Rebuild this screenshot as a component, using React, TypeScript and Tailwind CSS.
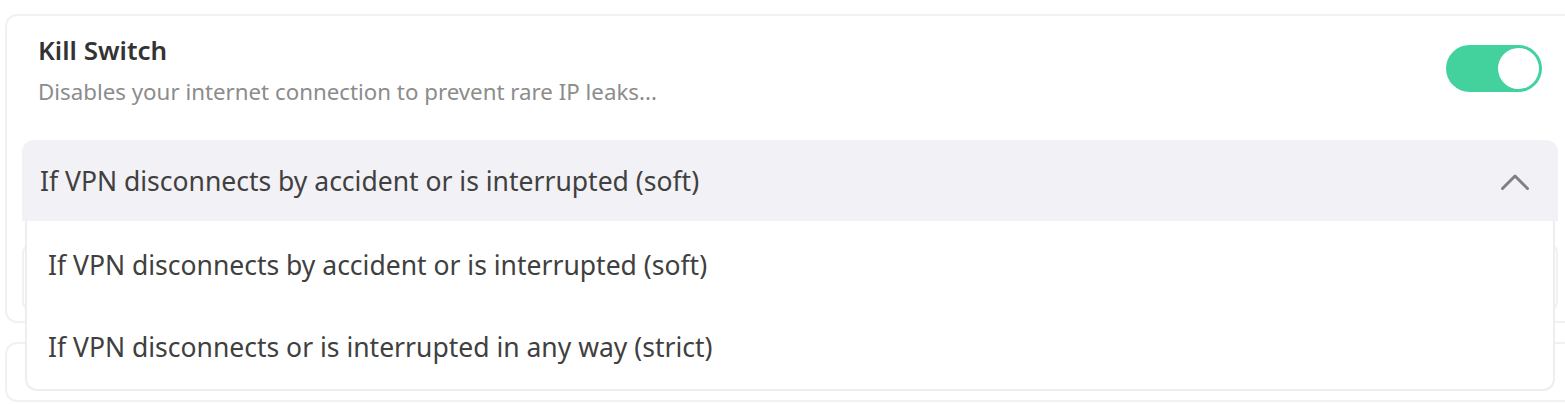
import React from "react";

const options = [
  "If VPN disconnects by accident or is interrupted (soft)",
  "If VPN disconnects or is interrupted in any way (strict)",
];

export default function App() {
  return (
    <div
      className="w-[1565px] h-[404px] overflow-hidden bg-white pl-[5px] pt-[14px]"
      style={{ fontFamily: '"Noto Sans", "Open Sans", sans-serif' }}
    >
      <div className="w-[1580px] rounded-xl border-2 border-[#f1f1f3] bg-white px-[15px] pt-[16px] pb-[8px]">
        <div className="flex items-start justify-between pl-4 pr-[26px]">
          <div>
            <div className="text-[26px] font-semibold leading-[36px] text-[#333]">Kill Switch</div>
            <div className="mt-[9px] text-[22.3px] leading-[30px] text-[#8c8c8c]">
              Disables your internet connection to prevent rare IP leaks...
            </div>
          </div>
          <button className="mt-[13px] flex h-[47px] w-[96px] items-center justify-end rounded-full bg-[#43d19e] p-[3px]">
            <span className="h-[41px] w-[41px] rounded-full bg-white" />
          </button>
        </div>

        <div className="relative mt-[33px] w-[1536px]">
          <div className="flex h-[81px] items-center justify-between rounded-t-xl bg-[#f2f1f6] pl-[18px] pr-[28px]">
            <span className="mt-[3px] text-[26.5px] text-[#404040]">{options[0]}</span>
            <svg width="30" height="18" viewBox="0 0 30 18" fill="none" className="mt-[2px]">
              <path d="M2.5 15.5 L15 3 L27.5 15.5" stroke="#808080" strokeWidth="3" strokeLinecap="round" strokeLinejoin="round" />
            </svg>
          </div>
          <div className="mt-[21px] h-[71px] rounded-xl border-2 border-[#f1f1f3]" />

          <div className="absolute left-[3px] top-[81px] w-[1530px] rounded-b-xl border-2 border-t-0 border-[#eeeef2] bg-white pt-[4px]">
            {options.map((o) => (
              <div key={o} className="flex h-[82px] items-center px-[21px] text-[26.5px] text-[#404040]">
                {o}
              </div>
            ))}
          </div>
        </div>
      </div>
      <div className="mt-[19px] h-[60px] w-[1580px] rounded-xl border-2 border-[#f1f1f3]" />
    </div>
  );
}
